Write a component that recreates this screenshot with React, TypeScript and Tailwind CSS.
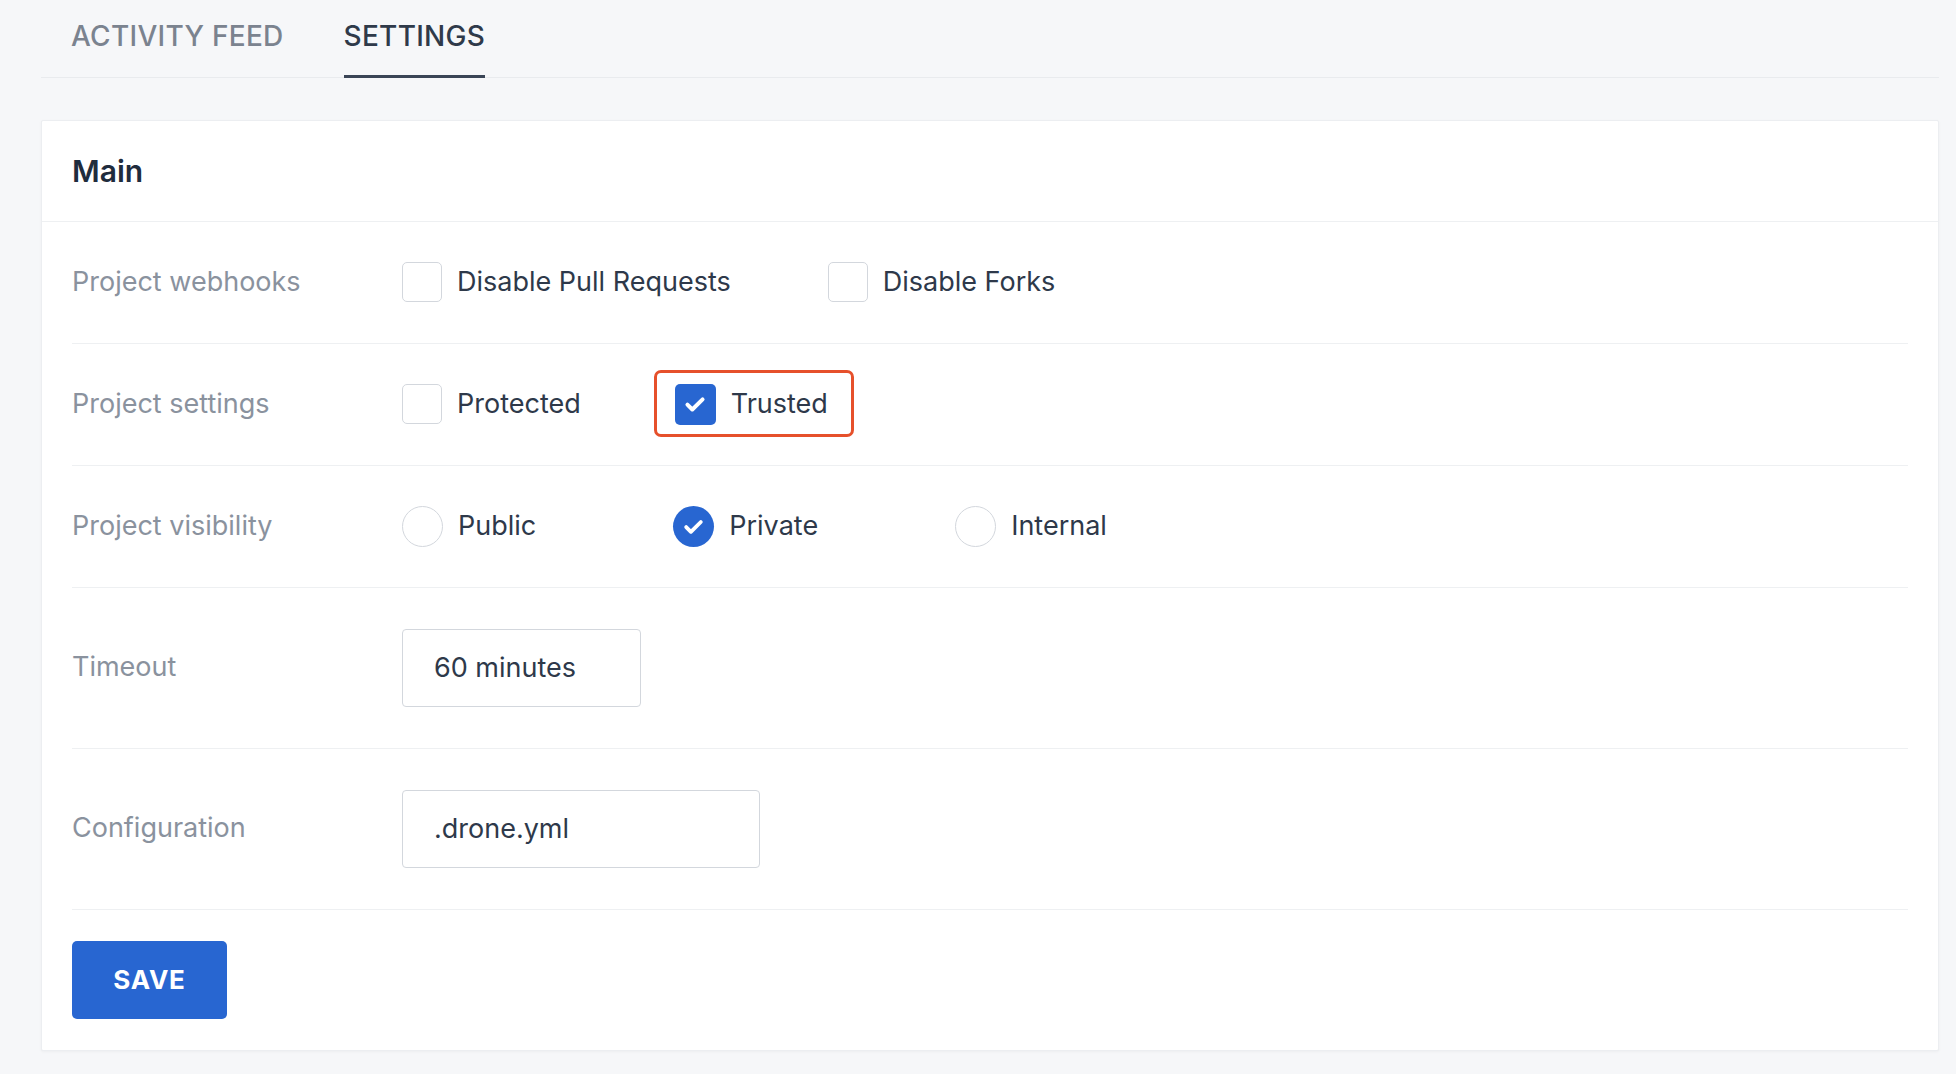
import React, { useState } from 'react';

type Opt = { label: string; checked?: boolean; highlight?: boolean };

function CheckIcon({ className }: { className?: string }) {
  return (
    <svg viewBox="0 0 24 24" fill="none" stroke="currentColor" strokeWidth={3.4} strokeLinecap="round" strokeLinejoin="round" className={className}>
      <path d="M5.5 12.5l4.2 4.2L18.5 8" />
    </svg>
  );
}

function Checkbox({ label, checked, highlight }: Opt) {
  const [on, setOn] = useState(!!checked);
  return (
    <label className="relative flex items-center gap-[15px] cursor-pointer select-none">
      {/* annotation box drawn over the row */}
      {highlight && (
        <span className="absolute -left-[21px] -right-[26px] -top-[14px] -bottom-[12px] border-[3.5px] border-[#e6502b] rounded-[7px] pointer-events-none" />
      )}
      <span
        onClick={() => setOn(!on)}
        className={
          on
            ? 'w-[41px] h-[41px] rounded-[5px] bg-[#2866d1] flex items-center justify-center text-white'
            : 'w-[40px] h-[40px] rounded-[5px] border-[1.5px] border-[#d3d7dd] bg-white'
        }
      >
        {on && <CheckIcon className="w-[28px] h-[28px]" />}
      </span>
      <span className="text-[27px] text-[#2e394a]">{label}</span>
    </label>
  );
}

function Radio({ label, checked }: Opt) {
  return (
    <label className="flex items-center gap-[15px] cursor-pointer select-none">
      <span
        className={
          checked
            ? 'w-[41px] h-[41px] rounded-full bg-[#2866d1] flex items-center justify-center text-white'
            : 'w-[41px] h-[41px] rounded-full border-[1.5px] border-[#d3d7dd] bg-white'
        }
      >
        {checked && <CheckIcon className="w-[27px] h-[27px]" />}
      </span>
      <span className="text-[27px] text-[#2e394a]">{label}</span>
    </label>
  );
}

function Row({ label, children, tall }: { label: string; children: React.ReactNode; tall?: boolean }) {
  return (
    <div className={`flex items-center border-b border-[#eef0f2] ${tall ? 'py-[41px]' : 'py-[40px]'}`}>
      <div className="w-[330px] shrink-0 text-[27px] text-[#8a929e]">{label}</div>
      {children}
    </div>
  );
}

export default function App() {
  return (
    <div className="min-h-screen bg-[#f6f7f9] pl-[41px] pr-[17px] font-['Inter',sans-serif]">
      {/* Tabs */}
      <div className="flex gap-[60px] pl-[30px] border-b border-[#e9ebee]">
        <div className="pt-[15px] pb-[20px] text-[28px] font-medium tracking-[0.01em] text-[#7b838f]">ACTIVITY FEED</div>
        <div className="pt-[15px] pb-[18px] text-[28px] font-medium tracking-[0.01em] text-[#2f3a4a] border-b-[3px] border-[#3a4556] -mb-px">
          SETTINGS
        </div>
      </div>

      {/* Card */}
      <div className="mt-[42px] bg-white border border-[#eceef1] rounded-[2px] shadow-[0_1px_3px_rgba(0,0,0,0.04)]">
        <div className="h-[101px] flex items-center px-[30px] border-b border-[#eef0f2]">
          <h2 className="text-[30px] font-semibold text-[#1f2c3d]">Main</h2>
        </div>

        <div className="px-[30px]">
          <Row label="Project webhooks">
            <div className="flex items-center gap-[97px]">
              <Checkbox label="Disable Pull Requests" />
              <Checkbox label="Disable Forks" />
            </div>
          </Row>
          <Row label="Project settings">
            <div className="flex items-center gap-[94px]">
              <Checkbox label="Protected" />
              <Checkbox label="Trusted" checked highlight />
            </div>
          </Row>
          <Row label="Project visibility">
            <div className="flex items-center gap-[137px]">
              <Radio label="Public" />
              <Radio label="Private" checked />
              <Radio label="Internal" />
            </div>
          </Row>
          <Row label="Timeout" tall>
            <input
              defaultValue="60 minutes"
              className="w-[239px] h-[78px] px-[31px] text-[27px] text-[#2e394a] border-[1.5px] border-[#d3d7dd] rounded-[4px] outline-none"
            />
          </Row>
          <Row label="Configuration" tall>
            <input
              defaultValue=".drone.yml"
              className="w-[358px] h-[78px] px-[31px] text-[27px] text-[#2e394a] border-[1.5px] border-[#d3d7dd] rounded-[4px] outline-none"
            />
          </Row>

          <div className="pt-[31px] pb-[31px]">
            <button className="w-[155px] h-[78px] rounded-[5px] bg-[#2866d1] text-white text-[26px] font-bold tracking-[0.03em]">
              SAVE
            </button>
          </div>
        </div>
      </div>
    </div>
  );
}
